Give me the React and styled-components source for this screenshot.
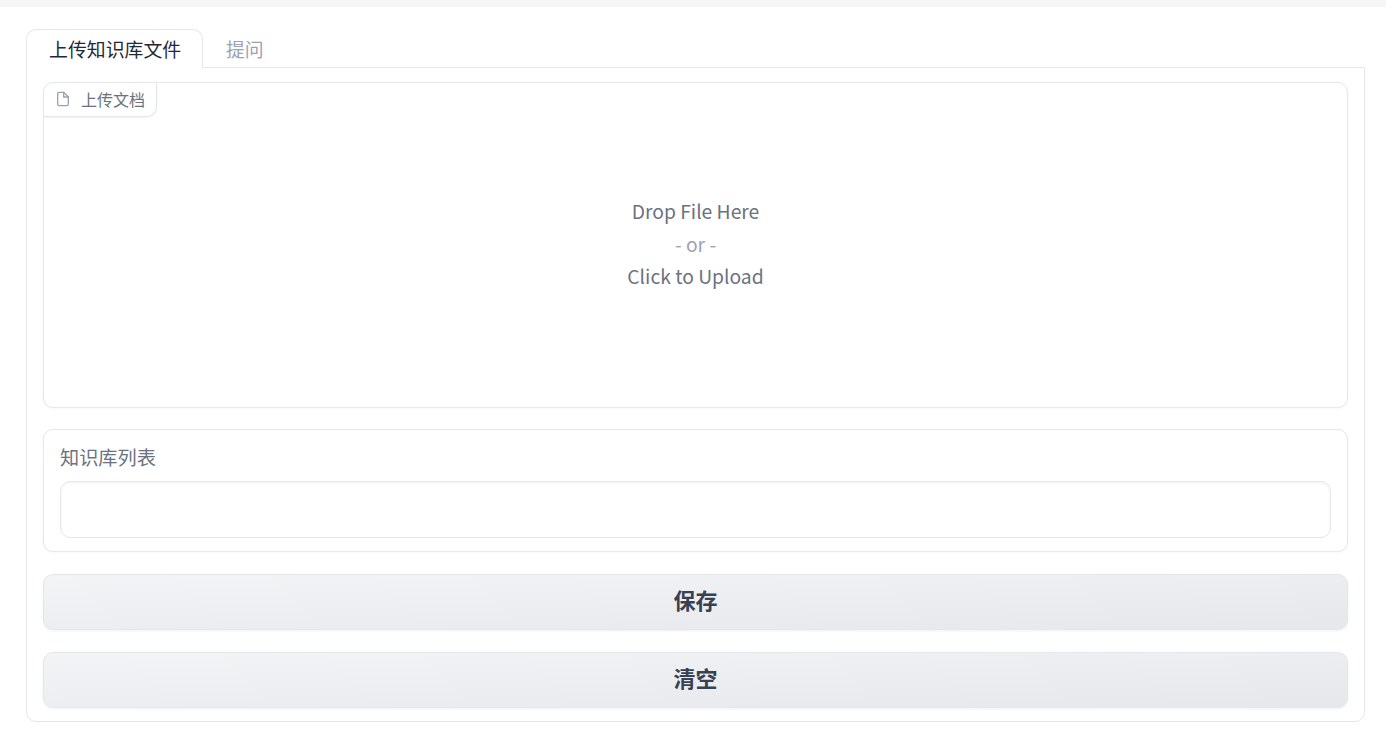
import React from 'react'
import styled, { createGlobalStyle } from 'styled-components'

const Global = createGlobalStyle`
  html, body { margin: 0; padding: 0; background: #fff; }
  body { font-family: "Noto Sans CJK SC", "Noto Sans", sans-serif; }
`
const TopBar = styled.div`
  height: 7px; background: #f6f6f6;
`
const Page = styled.div`
  padding: 22px 21px 26px 26px;
`
const TabRow = styled.div`
  display: flex; height: 39px; position: relative; z-index: 1;
`
const Tab = styled.button`
  box-sizing: border-box; height: 39px; margin: 0; font-family: inherit; font-size: 18.9px; line-height: 38px;
  padding: 0 20.7px 0 22px; cursor: pointer;
  background: ${({ $active }) => ($active ? '#fff' : 'transparent')};
  color: ${({ $active }) => ($active ? '#1f2937' : '#9ca3af')};
  border: 1px solid ${({ $active }) => ($active ? '#e5e7eb' : 'transparent')};
  border-bottom: none; border-radius: 10px 10px 0 0;
`
const Panel = styled.div`
  box-sizing: border-box; height: 655px; margin-top: -1px; padding: 14px 16px 13px;
  display: flex; flex-direction: column; gap: 21.75px;
  border: 1px solid #e5e7eb; border-radius: 0 0 10px 10px;
`
const Card = styled.div`
  box-sizing: border-box; border: 1px solid #e5e7eb; border-radius: 10px; background: #fff;
  box-shadow: 0 1px 2px rgba(0,0,0,0.03);
`
const UploadCard = styled(Card)`
  height: 325.5px; flex: none; display: flex; flex-direction: column; overflow: hidden;
`
const UploadLabel = styled.div`
  box-sizing: border-box; align-self: flex-start; height: 35px; width: 114px; margin: -1px 0 0 -1px;
  display: flex; align-items: center; gap: 10px; padding: 0 11px 1px 11px;
  font-size: 16px; color: #6b7280; white-space: nowrap;
  border: 1px solid #e5e7eb; border-top-color: transparent; border-left-color: transparent;
  border-radius: 0 0 10px 0; box-shadow: 0 1px 2px rgba(0,0,0,0.05);
`
const DropZone = styled.div`
  flex: 1; display: flex; flex-direction: column; align-items: center; padding-top: 78px;
  font-size: 19.3px; line-height: 32.5px; color: #6b7280;
`
const Or = styled.span`
  color: #9ca3af;
`
const ListCard = styled(Card)`
  height: 123px; flex: none; padding: 12px 16px 13px; display: flex; flex-direction: column; gap: 9px;
`
const FieldLabel = styled.label`
  font-size: 19.2px; line-height: 30px; color: #6b7280;
`
const FieldInput = styled.input`
  box-sizing: border-box; width: 100%; height: 57px; padding: 0 16px; font-family: inherit; font-size: 19px;
  background: #fff; outline: none; border: 1px solid #e5e7eb; border-radius: 10px;
  box-shadow: inset 0 1px 3px rgba(0,0,0,0.06);
`
const ActionButton = styled.button`
  box-sizing: border-box; width: 100%; height: 56px; flex: none; margin: 0; padding: 0 0 6px;
  font-family: inherit; font-size: 22px; font-weight: 600;
  color: #374151; cursor: pointer; border: 1px solid #e5e7eb; border-radius: 10px;
  background: linear-gradient(to bottom right, #f3f4f6, #e5e7eb);
  box-shadow: 0 1px 3px rgba(0,0,0,0.06);
`

function FileIcon() {
  return (
    <svg width="16" height="16" viewBox="0 0 24 24" fill="none" stroke="#9ca3af" strokeWidth="2" strokeLinecap="round" strokeLinejoin="round">
      <path d="M13 2H6a2 2 0 0 0-2 2v16a2 2 0 0 0 2 2h12a2 2 0 0 0 2-2V9z" />
      <path d="M13 2v7h7" />
    </svg>
  )
}

export default function App() {
  return (
    <>
      <Global />
      <TopBar />
      <Page>
        <TabRow>
          <Tab $active>上传知识库文件</Tab>
          <Tab>提问</Tab>
        </TabRow>
        <Panel>
          <UploadCard>
            <UploadLabel><FileIcon />上传文档</UploadLabel>
            <DropZone>
              <span>Drop File Here</span>
              <Or>- or -</Or>
              <span>Click to Upload</span>
            </DropZone>
          </UploadCard>
          <ListCard>
            <FieldLabel>知识库列表</FieldLabel>
            <FieldInput />
          </ListCard>
          <ActionButton>保存</ActionButton>
          <ActionButton>清空</ActionButton>
        </Panel>
      </Page>
    </>
  )
}
